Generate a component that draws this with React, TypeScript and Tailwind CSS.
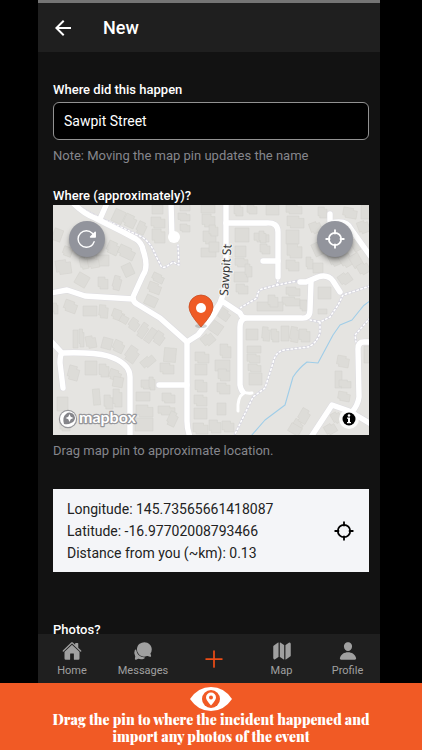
import type { ReactNode } from "react";
import { IoAddOutline, IoChatbubbles, IoHome, IoMap, IoPerson, IoReloadOutline } from "react-icons/io5";
import { MdArrowBack } from "react-icons/md";

// x, y, width, height, rotation
const buildings: number[][] = [
  [60, 5, 11, 13, 25], [71, 10, 12, 12, 25], [84, 17, 9, 12, 25], [99, 0, 11, 9, 0], [98, 12, 14, 11, 0], [99, 24, 13, 14, 0],
  [127, 0, 10, 6, 0], [125, 8, 12, 8, 0], [127, 19, 10, 8, 0], [148, 0, 14, 8, 0], [149, 9, 13, 13, 0], [150, 26, 13, 13, 0], [148, 43, 15, 9, 0],
  [54, 37, 12, 12, 25], [65, 42, 17, 11, 25], [43, 50, 13, 11, 0], [27, 52, 8, 12, -12], [35, 53, 11, 10, -10], [0, 24, 9, 12, 20], [10, 42, 9, 9, 20],
  [3, 55, 15, 14, -8], [23, 69, 12, 12, 30], [45, 72, 10, 12, 0], [60, 71, 8, 14, 15], [70, 59, 10, 12, -25],
  [99, 69, 12, 8, 25], [95, 78, 13, 10, 20], [92, 91, 12, 10, 25], [0, 98, 5, 11, 0], [11, 96, 13, 11, 20], [30, 101, 14, 10, 0], [46, 100, 9, 13, 5], [59, 105, 12, 10, 20],
  [20, 125, 5, 18, 0], [26, 124, 5, 18, 0], [33, 131, 10, 12, -10], [49, 133, 10, 11, 15], [60, 136, 11, 11, 25], [73, 142, 12, 15, 35],
  [67, 111, 8, 7, 30], [76, 114, 10, 11, 35], [86, 118, 8, 15, 35], [94, 123, 7, 15, 35], [101, 127, 10, 12, 35], [88, 152, 14, 9, -40],
  [111, 143, 12, 14, 5], [107, 158, 14, 11, 0], [15, 161, 11, 14, 15], [32, 156, 12, 14, 0], [46, 159, 10, 13, 0], [56, 165, 12, 10, 20], [60, 172, 10, 10, 10],
  [88, 175, 12, 9, 0], [96, 172, 6, 13, 0], [83, 187, 14, 9, 0], [109, 188, 13, 10, 0], [83, 200, 17, 12, 0], [82, 213, 18, 13, 0],
  [105, 201, 17, 9, 0], [115, 207, 9, 14, 25], [40, 184, 7, 16, -5], [51, 190, 9, 14, 0], [60, 184, 9, 18, 0], [4, 192, 11, 14, 0], [7, 216, 10, 10, 0],
  [142, 147, 14, 11, 0], [142, 159, 12, 11, 0], [142, 175, 12, 12, 0], [141, 190, 13, 11, 0], [141, 203, 13, 11, 0], [140, 218, 15, 11, 0],
  [149, 129, 12, 11, -40], [156, 117, 13, 11, 35], [164, 104, 13, 10, 35], [167, 139, 11, 14, 0], [162, 155, 15, 11, 0], [165, 164, 12, 12, 0], [164, 178, 13, 11, 0], [164, 198, 9, 12, 0], [156, 215, 12, 13, 0], [169, 216, 12, 11, 0],
  [193, 124, 12, 11, 0], [209, 122, 8, 14, 5], [218, 124, 8, 13, 0], [228, 121, 8, 15, 0], [237, 122, 9, 15, 10], [246, 124, 11, 13, 0],
  [194, 141, 14, 7, 0], [194, 149, 13, 9, 0], [195, 159, 13, 8, 0], [196, 168, 13, 12, 0],
  [181, 0, 9, 11, 0], [194, 0, 10, 9, 0], [213, 0, 13, 10, 0], [233, 0, 16, 9, 0], [234, 11, 17, 12, 0], [233, 25, 13, 14, 0], [234, 39, 15, 14, 0], [233, 55, 13, 11, 0],
  [182, 23, 14, 14, 0], [201, 28, 15, 9, 0], [206, 26, 7, 12, 0], [182, 41, 11, 11, 0], [207, 39, 10, 10, 0], [182, 53, 13, 9, 0], [181, 67, 14, 10, 0], [183, 79, 12, 10, 0],
  [156, 20, 9, 11, 0], [156, 37, 10, 10, 0], [192, 59, 7, 13, 0], [253, 52, 7, 12, 0], [260, 58, 10, 10, 0], [233, 82, 14, 9, 0], [229, 92, 18, 9, 0], [204, 97, 26, 9, 0], [215, 90, 10, 12, 0], [247, 95, 10, 11, 0], [265, 82, 13, 12, 0],
  [257, 17, 11, 11, -20], [268, 24, 10, 14, -25], [260, 37, 12, 13, -25], [276, 46, 10, 15, -25], [287, 47, 11, 15, -30], [298, 49, 10, 13, -30], [305, 58, 11, 11, -30], [286, 68, 12, 11, -35], [299, 34, 8, 12, -30],
  [265, 2, 9, 11, 0], [290, 3, 14, 10, 10], [308, 0, 9, 14, 0], [305, 16, 11, 12, -20],
  [284, 151, 12, 11, 10], [282, 166, 7, 17, 0], [286, 175, 12, 8, 0], [285, 187, 12, 9, 10], [311, 141, 8, 17, 0],
  [239, 215, 10, 13, 30], [246, 204, 10, 14, 30], [236, 220, 12, 9, 30], [279, 207, 9, 11, -30], [272, 219, 11, 10, -30], [265, 104, 9, 5, 0],
];

const roads = [
  "M20 -2Q31 9 42 13L70 27L83 34Q89 38 90 45Q96 62 90 70L80 92Q80 97 84 99L107 113L134 137L145 130L160 111L169 96L187 108Q189 113 192 113H248Q257 114 257 105L258 77",
  "M54 -2L47 14", "M-2 88L14 85L32 91L80 94", "M118 -2L119 32",
  "M173 -2V58L172 84L167 98L152 121", "M173 18H213Q225 17 225 27V72", "M210 56H225",
  "M247 77H253Q258 75 265 72Q275 69 280 76L287 87", "M277 9V18M277 18Q294 14 298 24L318 52",
  "M134 137V216Q134 224 137 232", "M106 180H134", "M-2 136L9 148Q40 147 55 151Q77 158 77 172V232", "M9 148Q7 150 7 158L10 183",
  "M192 113Q187 115 187 122V180Q188 185 190 187",
  "M318 137H311Q305 137 305 144L306 192Q305 200 299 207", "M258 232L279 200L296 206L318 219",
];

const lanes = ["M188 184Q190 189 199 188", "M191 188Q184 192 185 206"];

const paths = [
  "M24 0Q41 11 59 18L89 32Q98 38 102 49L108 61Q110 65 120 57L126 60L125 40",
  "M225 75L224 80L209 84Q204 86 204 93L187 103", "M224 80L244 76",
  "M317 81L290 90L285 100L277 112L267 117L267 128Q263 139 255 142L231 145Q222 147 220 158L212 183L200 192L182 229", "M257 115L267 117",
  "M317 113L302 130L303 137",
];

function LocateIcon() {
  return (
    <svg width="20" height="20" viewBox="0 0 20 20" fill="none" stroke="currentColor" strokeWidth="1.8" strokeLinecap="round" aria-hidden="true">
      <circle cx="10" cy="10" r="6.200" />
      <path d="M10 1.200V4.500M10 15.500V18.800M1.200 10H4.500M15.500 10H18.800" />
    </svg>
  );
}

function MapView() {
  return (
    <div className="relative w-full overflow-hidden bg-[#e5e4e1]">
      <svg viewBox="0 0 316 230" className="block w-full" role="img" aria-label="Map of Sawpit Street">
        <rect width="316" height="230" fill="#e5e4e1" />
        <g fill="#dddcd8" stroke="#d3d2cd" strokeWidth="0.5">
          {buildings.map(([x, y, w, h, r], i) => (
            <path
              key={i}
              d={i % 3 === 0 ? `M${x} ${y}h${w}v${h}h${-w}z` : `M${x} ${y}h${w * 0.7}v${h * 0.2}h${w * 0.3}v${h * 0.8}h${-w * 0.8}v${-h * 0.2}h${-w * 0.2}z`}
              transform={`rotate(${r} ${x + w / 2} ${y + h / 2})`}
            />
          ))}
        </g>
        <g fill="none" strokeLinecap="round" strokeLinejoin="round">
          {paths.map((d) => <path key={d} d={d} stroke="#d7d6df" strokeWidth="2.4" />)}
          {paths.map((d) => <path key={d} d={d} stroke="#fff" strokeWidth="1.5" strokeDasharray="1.5 2.6" />)}
          <path d="M317 96Q311 99 307 105L299 115L287 120L280 130L265 158L254 157Q246 163 240 172L232 200L212 215L198 231" stroke="#9fcde8" strokeWidth="1.1" />
          {roads.map((d) => <path key={d} d={d} stroke="#dddce0" strokeWidth="6.4" />)}
          {lanes.map((d) => <path key={d} d={d} stroke="#fff" strokeWidth="3" />)}
          {roads.map((d) => <path key={d} d={d} stroke="#fff" strokeWidth="5.4" />)}
        </g>
        <circle cx="121" cy="32" r="6" fill="#fff" />
        <text transform="translate(175 91) rotate(-86)" fontSize="12" fill="#333" stroke="#f5f5f4" strokeWidth="2" paintOrder="stroke" className="font-['Noto_Sans',sans-serif]">
          Sawpit St
        </text>
        <ellipse cx="148" cy="121" rx="6" ry="2" fill="#555" opacity="0.25" />
        <path d="M148 122Q136 109 136 102A12 12 0 0 1 160 102Q160 109 148 122Z" fill="#ef5b25" stroke="#c84a1e" strokeWidth="0.8" />
        <circle cx="148" cy="103" r="5" fill="#fff" />
        {/* attribution */}
        <g stroke="#96969a" strokeWidth="2.4" paintOrder="stroke" fill="#fff" strokeLinejoin="round">
          <circle cx="15" cy="214" r="8" />
          <text x="26" y="218" fontSize="16" fontWeight="700" className="font-[Lato,sans-serif]">mapbox</text>
        </g>
        <path d="M11 219Q9 212 13 209A5.300 5.300 0 1 1 18 218Q15 220 11 219Z" fill="#85858a" />
        <path d="M16.500 209L17.700 211.800L20.500 213L17.700 214.200L16.500 217L15.300 214.200L12.500 213L15.300 211.800Z" fill="#fff" />
        <circle cx="296" cy="214" r="10" fill="#fff" opacity="0.8" />
        <circle cx="296" cy="214" r="6.500" fill="#000" />
        <path d="M294 212.500H297V217H298V218.200H294V217H295V213.700H294Z" fill="#fff" />
        <circle cx="296" cy="210.500" r="1.300" fill="#fff" />
      </svg>
      <button aria-label="Reload map" className="absolute left-4 top-4 flex size-9 items-center justify-center rounded-full bg-[#92949c] text-white shadow-md shadow-black/40">
        <IoReloadOutline size={22} />
      </button>
      <button aria-label="Use my location" className="absolute right-4 top-4 flex size-9 items-center justify-center rounded-full bg-[#92949c] text-white shadow-md shadow-black/40">
        <LocateIcon />
      </button>
    </div>
  );
}

function Tab({ icon, label }: { icon: ReactNode; label: string }) {
  return (
    <a href={`#${label.toLowerCase()}`} className="flex flex-col items-center gap-0.5 pt-[7px] text-[#a0a0a0]">
      {icon}
      <span className="text-[11px] leading-4">{label}</span>
    </a>
  );
}

export default function App() {
  return (
    <div className="flex h-screen flex-col bg-black font-[Roboto,sans-serif] text-white">
      <div className="ml-[38px] mr-[42px] flex min-h-0 flex-1 flex-col border-t-3 border-[#757575] bg-[#121212]">
        <header className="flex h-[49px] shrink-0 items-center gap-7 bg-[#1f1f1f] px-[13px]">
          <button aria-label="Back">
            <MdArrowBack size={24} />
          </button>
          <h1 className="text-lg font-medium">New</h1>
        </header>

        <main className="min-h-0 flex-1 overflow-hidden pl-[15px] pr-[11px] pt-7">
          <label htmlFor="place" className="block text-[13px] leading-5 font-medium">
            Where did this happen
          </label>
          <input
            id="place"
            defaultValue="Sawpit Street"
            className="mt-0.5 block h-[38px] w-full rounded-md border border-[#929292] bg-black px-2.5 text-sm"
          />
          <p className="mt-1.5 text-[13px] leading-5 text-[#85868c]">Note: Moving the map pin updates the name</p>

          <h2 className="mt-5 text-[13px] leading-[19px] font-medium">Where (approximately)?</h2>
          <MapView />
          <p className="mt-1.5 text-[13px] leading-5 text-[#85868c]">Drag map pin to approximate location.</p>

          <section className="mt-7 flex items-center justify-between bg-[#f4f5f8] pb-2 pl-3.5 pr-[15px] pt-[9px] text-[#222]">
            <div className="text-sm leading-[22px]">
              <p>Longitude: 145.73565661418087</p>
              <p>Latitude: -16.97702008793466</p>
              <p>Distance from you (~km): 0.13</p>
            </div>
            <button aria-label="Locate me" className="text-black">
              <LocateIcon />
            </button>
          </section>

          <h2 className="mt-12 text-[13px] leading-5 font-medium">Photos?</h2>
        </main>

        <nav className="grid h-[49px] shrink-0 grid-cols-[68fr_74fr_68fr_67fr_65fr] bg-[#1f1f1f]">
          <Tab icon={<IoHome size={20} />} label="Home" />
          <Tab icon={<IoChatbubbles size={20} />} label="Messages" />
          <a href="#new" aria-label="New" className="flex items-center justify-center text-[#ea4c16]">
            <IoAddOutline size={28} />
          </a>
          <Tab icon={<IoMap size={20} />} label="Map" />
          <Tab icon={<IoPerson size={20} />} label="Profile" />
        </nav>
      </div>

      <footer className="flex shrink-0 flex-col items-center bg-[#f15a25] pb-1 pt-1 text-center">
        <svg width="42" height="24" viewBox="0 0 42 24" aria-hidden="true">
          <path d="M0 12Q8 0 21 0T42 12Q34 24 21 24T0 12Z" fill="#fff" />
          <circle cx="21" cy="12" r="9" fill="#f15a25" />
          <path d="M21 18.500Q16 13 16 10.500A5 5 0 0 1 26 10.500Q26 13 21 18.500Z" fill="#fff" />
          <circle cx="21" cy="10.500" r="2" fill="#f15a25" />
        </svg>
        <p className="pb-px font-['Playfair_Display','Liberation_Serif',serif] text-sm leading-[17px] font-black">
          Drag the pin to where the incident happened and
          <br />
          import any photos of the event
        </p>
      </footer>
    </div>
  );
}
